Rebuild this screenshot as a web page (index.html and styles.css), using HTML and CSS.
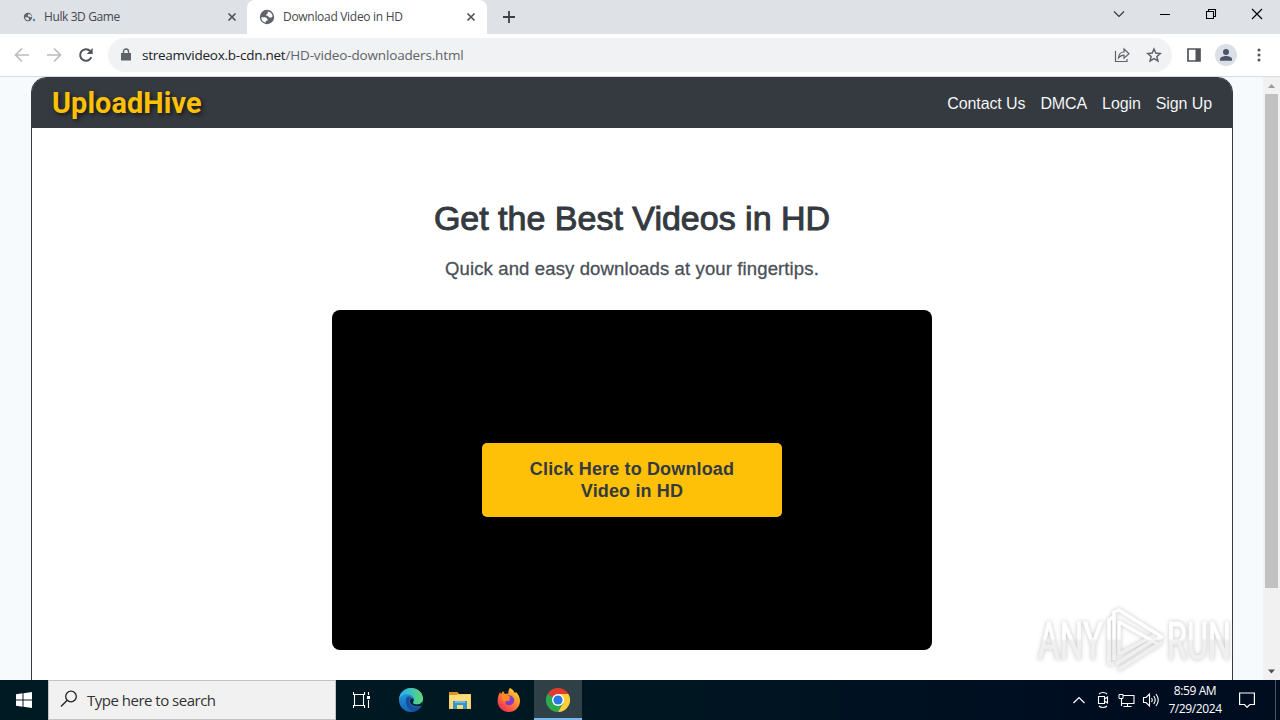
FILE: index.html
```html
<!DOCTYPE html>
<html lang="en">
<head>
    <meta charset="UTF-8">
    <meta name="viewport" content="width=device-width, initial-scale=1.0">
    <title>Download Video in HD</title>
    <link rel="stylesheet" href="styles.css">
</head>
<body>
    <!-- Tab strip -->
    <div class="tab-strip">
        <div class="tab">
            <svg class="favicon" width="16" height="16" viewBox="0 0 16 16">
                <circle cx="7" cy="8" r="4.200" fill="#5f6368"/>
                <path d="M4 8.300h2.400c1 0 1 1 1.600 1.300v1.400C5.600 11.500 4 10.500 4 8.300zM7.500 5c1.700 0 3 1 3.400 2.600l-1.300.8-1.500-.8h-1l-.4-1.200z" fill="#dee1e6"/>
                <circle cx="13" cy="11" r="1.300" fill="#4f8fc9"/>
            </svg>
            <span class="tab-title first-title">Hulk 3D Game</span>
            <svg class="tab-close" width="10" height="10" viewBox="0 0 10 10"><path d="M1.500 1.500l7 7M8.500 1.500l-7 7" stroke="#50545a" stroke-width="1.700"/></svg>
        </div>
        <div class="tab active">
            <svg class="favicon" width="16" height="16" viewBox="0 0 16 16">
                <circle cx="8" cy="8" r="7.200" fill="#5f6368"/>
                <path d="M2.300 8.200h3.600c1.800 0 1.600 1.400 2.700 1.800v1.500l-1.800.4v1.700C4 13.300 2.300 11 2.300 8.200zM8.600 2.400c2.700.2 4.800 2.200 5.100 4.800l-1.600 1.500-2.300-.5-.8-1.400H7.300V5.300l1.600-.9z" fill="#fff"/>
            </svg>
            <span class="tab-title second-title">Download Video in HD</span>
            <svg class="tab-close" width="10" height="10" viewBox="0 0 10 10"><path d="M1.500 1.500l7 7M8.500 1.500l-7 7" stroke="#50545a" stroke-width="1.700"/></svg>
        </div>
        <svg class="new-tab" width="12" height="12" viewBox="0 0 12 12"><path d="M6 0v12M0 6h12" stroke="#3c4043" stroke-width="1.800"/></svg>
        <div class="window-buttons">
            <svg width="12" height="12" viewBox="0 0 12 12"><path d="M1 3.500l5 5 5-5" fill="none" stroke="#333" stroke-width="1.100"/></svg>
            <svg width="12" height="12" viewBox="0 0 12 12"><path d="M1 6.500h10" stroke="#000"/></svg>
            <svg width="12" height="12" viewBox="0 0 12 12"><path d="M1.500 3.500h7v7h-7zM3.500 3.500v-2h7v7h-2" fill="none" stroke="#000" stroke-width="1.100"/></svg>
            <svg width="12" height="12" viewBox="0 0 12 12"><path d="M1 1l10 10M11 1L1 11" stroke="#000" stroke-width="1.200"/></svg>
        </div>
    </div>

    <!-- Toolbar -->
    <div class="toolbar">
        <svg class="tool" width="16" height="16" viewBox="0 0 16 16"><path d="M15 8H2M8 1.500L1.500 8 8 14.500" fill="none" stroke="#babcbe" stroke-width="1.700"/></svg>
        <svg class="tool" width="16" height="16" viewBox="0 0 16 16"><path d="M1 8h13M8 1.500L14.500 8 8 14.500" fill="none" stroke="#babcbe" stroke-width="1.700"/></svg>
        <svg class="tool" width="16" height="16" viewBox="0 0 16 16"><path d="M13.300 10.200A5.800 5.800 0 1 1 12.200 4" fill="none" stroke="#50545a" stroke-width="2"/><path d="M14.700 1v6H8.700z" fill="#50545a"/></svg>
        <div class="address-bar">
            <svg width="10" height="14" viewBox="0 0 10 14"><path d="M0 5h10v7.500H0z" fill="#5f6368"/><path d="M2.500 6V3.500a2.500 2.500 0 0 1 5 0V6" fill="none" stroke="#5f6368" stroke-width="1.400"/></svg>
            <div class="url"><span class="host">streamvideox.b-cdn.net</span><span class="path">/HD-video-downloaders.html</span></div>
            <svg class="share" width="16" height="16" viewBox="0 0 16 16"><path d="M1.500 4v10.500h11.500V12M4.500 11c.3-4 2.500-6 5.500-6V2l5 4.700-5 4.500v-3c-2.500 0-4 .8-5.500 2.800z" fill="none" stroke="#5f6368" stroke-width="1.200"/></svg>
            <svg width="16" height="16" viewBox="0 0 16 16"><path d="M8 2l1.800 4.100 4.500.4-3.400 3 1 4.400L8 11.600l-3.900 2.300 1-4.400-3.400-3 4.500-.4z" fill="none" stroke="#5f6368" stroke-width="1.500"/></svg>
        </div>
        <svg class="panel" width="14" height="14" viewBox="0 0 14 14"><path d="M1 1h12v12H1z" fill="none" stroke="#50545a" stroke-width="1.700"/><path d="M8.500 1H13v12H8.500z" fill="#50545a"/></svg>
        <svg class="profile" width="22" height="22" viewBox="0 0 22 22"><circle cx="11" cy="11" r="11" fill="#dcdfe6"/><circle cx="11" cy="8" r="3" fill="#4c5469"/><path d="M5 16.800V15c0-2.200 3.800-3.100 6-3.100s6 .9 6 3.100v1.800z" fill="#4c5469"/></svg>
        <svg class="kebab" width="4" height="14" viewBox="0 0 4 14"><circle cx="2" cy="2" r="1.500" fill="#50545a"/><circle cx="2" cy="7" r="1.500" fill="#50545a"/><circle cx="2" cy="12" r="1.500" fill="#50545a"/></svg>
    </div>

    <!-- Web page -->
    <div class="viewport">
        <div class="page">
            <div class="container">
                <header class="header">
                    <div class="logo">UploadHive</div>
                    <nav>
                        <a>Contact Us</a>
                        <a>DMCA</a>
                        <a>Login</a>
                        <a>Sign Up</a>
                    </nav>
                </header>
                <main>
                    <h1>Get the Best Videos in HD</h1>
                    <p>Quick and easy downloads at your fingertips.</p>
                    <div class="video">
                        <a class="download">Click Here to Download<br>Video in HD</a>
                    </div>
                </main>
            </div>
        </div>
        <div class="scrollbar">
            <svg width="17" height="17" viewBox="0 0 17 17"><path d="M5 11l3.500-4 3.500 4z" fill="#9c9c9c"/></svg>
            <div class="thumb"></div>
            <svg class="down" width="17" height="17" viewBox="0 0 17 17"><path d="M5 6.500h7L8.500 10.500z" fill="#505050"/></svg>
        </div>
        <svg class="watermark" width="224" height="72" viewBox="0 0 224 72">
            <defs>
                <linearGradient id="fade" gradientUnits="userSpaceOnUse" x1="0" y1="34" x2="0" y2="37">
                    <stop offset="0" stop-color="#fff"/><stop offset="1" stop-color="#f0f0f0"/>
                </linearGradient>
            </defs>
            <g fill="url(#fade)" stroke="url(#fade)" stroke-width="1">
                <text x="6" y="55" textLength="65" lengthAdjust="spacingAndGlyphs">ANY</text>
                <text x="135" y="55" textLength="64" lengthAdjust="spacingAndGlyphs">RUN</text>
            </g>
            <g fill="none" stroke-linejoin="round" stroke-width="3.500">
                <path d="M87 50l36-19M86 66l44-28M84 60l42-27M77 16v44h5" stroke="#f0f0f0"/>
                <path d="M83 12l-6 4v42M82 56V8l5-2 43 27-5 3M87 51V18l39 22" stroke="url(#fade)"/>
            </g>
        </svg>
    </div>

    <!-- Taskbar -->
    <div class="taskbar">
        <div class="start">
            <svg width="16" height="16" viewBox="0 0 16 16"><path d="M0 2.300l6.500-1v6.200H0zM7.500 1.200L16 0v7.500H7.500zM0 8.500h6.500v6.200L0 13.700zM7.500 8.500H16V16l-8.500-1.200z" fill="#fff"/></svg>
        </div>
        <div class="search">
            <svg width="18" height="18" viewBox="0 0 18 18"><circle cx="11" cy="6.500" r="5.300" fill="none" stroke="#222" stroke-width="1.300"/><path d="M7.200 10.300L1 16.500" stroke="#222" stroke-width="1.300"/></svg>
            <span>Type here to search</span>
        </div>
        <div class="task">
            <svg width="18" height="18" viewBox="0 0 18 18"><path d="M.5 1v2.500h11V1M.5 17v-2.500h11V17M1.500 3.500v11M10.500 3.500v11M15.500 1v3M15.500 9v8" fill="none" stroke="#fff" stroke-width="1.100"/><path d="M14 5h3v3h-3z" fill="#fff"/></svg>
        </div>
        <div class="task">
            <svg width="24" height="24" viewBox="0 0 24 24">
                <defs>
                    <linearGradient id="edgeTop"><stop offset=".2" stop-color="#2bb5e4"/><stop offset="1" stop-color="#61d96b"/></linearGradient>
                    <linearGradient id="edgeBody" x2="0" y2="1"><stop offset="0" stop-color="#2aa5e0"/><stop offset="1" stop-color="#1264b8"/></linearGradient>
                </defs>
                <circle cx="12" cy="12" r="12" fill="url(#edgeBody)"/>
                <path d="M0 11C1 4 6 0 12 0c7 0 12 5 12 10.500 0 4-3 6-6.500 6-3 0-4-1.300-3.500-2.200C17 10.500 13 6 8 6 4.500 6 1.500 8 0 11z" fill="url(#edgeTop)"/>
                <path d="M8 9c-3 4-.5 12 6 14.800A12 12 0 0 0 22.500 18c-6 3.500-12 0-12-4.500 0-2 1-3.500 2-4C11 8.500 9.500 8 8 9z" fill="#174f9c"/>
                <path d="M11 13.500c0-2 1-3.200 2.500-3.200 1.500 1 1.500 2.700.5 4-.6 1.200 1 2.300 3.500 2.300 2.500 0 5-1.300 6.300-3.300-.1 1.700-.5 3.200-1.300 4.400C17 19.500 11 17 11 13.500z" fill="#03212c"/>
            </svg>
        </div>
        <div class="task">
            <svg width="22" height="19" viewBox="0 0 22 19"><path d="M0 1h8l2 2h12v15H0z" fill="#f6cf65"/><path d="M0 1h8l1 2-1 1H0z" fill="#df9420"/><path d="M1 4h20v13H1z" fill="#fbdc7d"/><path d="M4 18v-8h14v8h-4v-4H8v4z" fill="#3c92cc"/><path d="M6 10h10v2H6z" fill="#6fbae5"/></svg>
        </div>
        <div class="task">
            <svg width="24" height="24" viewBox="0 0 24 24">
                <defs><linearGradient id="foxFire" x1="1" y1="0" x2=".2" y2="1"><stop offset="0" stop-color="#fff04a"/><stop offset=".4" stop-color="#ff9b26"/><stop offset="1" stop-color="#f3265c"/></linearGradient></defs>
                <path d="M13 0c4 2 4 4 5 5l1-1c2 2 4 5 4 9a11.200 11 0 0 1-22.400 0C.6 9 2 6 3 4l1 2 2-3 2 3c2-.5 3-.3 3.500-.5C11 3 12 1 13 0z" fill="url(#foxFire)"/>
                <path d="M7 9c3-3 9-2 10 2 1 5-4 8-8 5-1-1-1.500-2-1.500-3l4 .2 2-1.700-3-1.200z" fill="#7f39d5"/>
                <path d="M5 7c2-1 4-1 6 .5l3 2-2 1-1 1.500-3 .5L9 15c-3-1-5-4-4-8z" fill="#ff8a22"/>
            </svg>
        </div>
        <div class="task current">
            <svg width="24" height="24" viewBox="0 0 24 24">
                <path d="M12 12L1.600 6A12 12 0 0 1 22.400 6z" fill="#e33b2e"/>
                <path d="M12 12L1.600 6A12 12 0 0 0 12 24l5.200-9z" fill="#2da94f"/>
                <path d="M12 6h10.400A12 12 0 0 1 12 24l5.200-9z" fill="#fdd03b"/>
                <circle cx="12" cy="12" r="6" fill="#fff"/><circle cx="12" cy="12" r="4.600" fill="#2878e5"/>
            </svg>
        </div>
        <div class="tray">
            <svg width="14" height="8" viewBox="0 0 14 8"><path d="M1.500 7L7 1.500 12.500 7" fill="none" stroke="#fff" stroke-width="1.200"/></svg>
            <svg class="meet" width="12" height="18" viewBox="0 0 12 18"><path d="M1.500 5.500h6v7h-6zM7.500 8l3-2v6l-3-2M2 3c2-2 6-2 8 0M2 15c2 2 6 2 8 0" fill="none" stroke="#fff" stroke-width="1.100"/></svg>
            <svg class="network" width="17" height="15" viewBox="0 0 17 15"><path d="M5 2.500h11v8H3.500M9.500 10.500v3M5.500 13.500h8M3.500 6v7" fill="none" stroke="#fff" stroke-width="1.100"/><path d="M1 1.500h4v4H1z" fill="#000d21" stroke="#fff"/></svg>
            <svg class="sound" width="18" height="16" viewBox="0 0 18 16"><path d="M1.500 5.500h2.500l3.500-3.500v12L4 10.500H1.500zM9.500 6q1.500 2 0 4M11.700 4q3 4 0 8M14 2q4.500 6 0 12" fill="none" stroke="#fff" stroke-width="1.100"/></svg>
            <div class="clock"><div class="time">8:59 AM</div><div>7/29/2024</div></div>
            <svg class="notice" width="16" height="16" viewBox="0 0 16 16"><path d="M.6 1h14.800v11.500h-4.500L8 15.300l-2.500-2.800H.6z" fill="none" stroke="#fff" stroke-width="1.200"/></svg>
            <div class="show-desktop"></div>
        </div>
    </div>
</body>
</html>
```
FILE: styles.css
```css
* {
    box-sizing: border-box;
}

body {
    margin: 0;
    width: 1280px;
    height: 720px;
    display: flex;
    flex-direction: column;
    overflow: hidden;
    font-family: "Open Sans", "Noto Sans", sans-serif;
    white-space: nowrap;
}

svg {
    display: block;
    flex: none;
}

/* Browser */
.tab-strip {
    height: 34px;
    flex: none;
    display: flex;
    align-items: center;
    background: #dee1e6;
}

.tab {
    width: 247px;
    height: 34px;
    display: flex;
    align-items: center;
    padding: 0 10px 0 21px;
    font-size: 12px;
    color: #44474b;
}

.tab.active {
    width: 240px;
    padding: 0 11px 0 12px;
    background: #fff;
    border-radius: 8px 8px 0 0;
}

.tab-title {
    margin-left: 7px;
    margin-bottom: 1px;
    flex: 1;
}

.first-title {
    letter-spacing: -0.4px;
}

.second-title {
    margin-left: 8px;
    letter-spacing: -0.3px;
}

.new-tab {
    margin-left: 16px;
}

.window-buttons {
    display: flex;
    gap: 34px;
    margin-left: auto;
    margin-right: 17px;
    margin-bottom: 6px;
}

.toolbar {
    height: 43px;
    flex: none;
    display: flex;
    align-items: center;
    padding-left: 14px;
    background: #fff;
    border-bottom: 1px solid #d9dbde;
}

.tool {
    margin-right: 16px;
}

.address-bar {
    width: 1064px;
    height: 34px;
    margin-left: -2px;
    padding: 0 10px 0 13px;
    display: flex;
    align-items: center;
    background: #f0f2f4;
    border-radius: 17px;
}

.url {
    margin-left: 11px;
    margin-bottom: 1px;
    font-size: 13.5px;
    letter-spacing: -0.15px;
    color: #5f6368;
}

.host {
    letter-spacing: -0.25px;
    color: #202124;
}

.share {
    margin-left: auto;
    margin-right: 16px;
}

.panel {
    margin-left: 15px;
}

.profile {
    margin-left: 14px;
}

.kebab {
    margin-left: 20px;
}

/* Web page */
.viewport {
    height: 603px;
    flex: none;
    display: flex;
    position: relative;
    overflow: hidden;
    font-family: Arial, "Liberation Sans", sans-serif;
}

.page {
    width: 1263px;
    background: #f6fafd;
}

.container {
    width: 1202px;
    height: 650px;
    margin-left: 31px;
    background: #fff;
    border: 1px solid #343a40;
    border-radius: 15px;
    overflow: hidden;
}

.header {
    height: 50px;
    padding: 0 20px;
    display: flex;
    align-items: center;
    justify-content: space-between;
    background: #343a40;
}

.logo {
    font-family: Roboto, sans-serif;
    font-size: 28.8px;
    font-weight: bold;
    letter-spacing: 0.1px;
    color: #ffc107;
    text-shadow: 2px 2px 4px rgba(0, 0, 0, 0.6);
}

nav {
    display: flex;
    gap: 15px;
    padding-top: 2px;
    font-size: 16px;
    letter-spacing: -0.1px;
    color: #fff;
    -webkit-text-stroke: 0.1px #343a40;
}

main {
    display: flex;
    flex-direction: column;
    align-items: center;
    padding-top: 70px;
}

h1 {
    margin: 0;
    font-size: 34px;
    line-height: 40px;
    font-weight: normal;
    color: #343a40;
    -webkit-text-stroke: 1px #343a40;
}

p {
    margin: 19px 0 0;
    height: 53px;
    font-size: 18.5px;
    line-height: 24px;
    letter-spacing: 0.13px;
    color: #495057;
    -webkit-text-stroke: 0.3px #495057;
}

.video {
    width: 600px;
    height: 340px;
    display: flex;
    align-items: center;
    justify-content: center;
    background: #000;
    border-radius: 8px;
}

.download {
    width: 300px;
    height: 74px;
    padding-top: 15px;
    background: #ffc107;
    border-radius: 5px;
    font-size: 18px;
    line-height: 22px;
    font-weight: bold;
    letter-spacing: 0.15px;
    text-align: center;
    color: #343a40;
}

.scrollbar {
    width: 17px;
    display: flex;
    flex-direction: column;
    align-items: center;
    background: #f1f1f1;
}

.thumb {
    width: 13px;
    height: 494px;
    background: #c1c1c1;
}

.down {
    margin-top: auto;
}

/* Sits over the page corner */
.watermark {
    position: absolute;
    right: 24px;
    bottom: 4px;
    font-family: Roboto, sans-serif;
    font-size: 51px;
    filter: drop-shadow(0 0 2px #c4c4c4);
}

/* Taskbar */
.taskbar {
    height: 40px;
    flex: none;
    display: flex;
    background: linear-gradient(90deg, #001a23, #001721 50%, #000d21 85%);
}

.start,
.task {
    width: 48px;
    display: flex;
    align-items: center;
    justify-content: center;
}

.search {
    width: 288px;
    padding-left: 11px;
    display: flex;
    align-items: center;
    gap: 9px;
    background: #f1f1f1;
    border: 1px solid #c3c3c3;
    font-size: 15px;
    letter-spacing: -0.5px;
    color: #333;
}

.search svg {
    margin-bottom: 2px;
}

.task {
    width: 49px;
    padding-left: 2px;
}

.task.current {
    width: 48px;
    margin-left: 2px;
    background: #304047;
    border-bottom: 2px solid #76b9ed;
    padding: 2px 0 0;
}

.tray {
    margin-left: auto;
    width: 208px;
    display: flex;
    align-items: center;
    color: #fff;
}

.meet {
    margin-left: 11px;
}

.network {
    margin-left: 9px;
}

.sound {
    margin-left: 7px;
}

.clock {
    width: 62px;
    margin-left: 4px;
    font-size: 12px;
    line-height: 18px;
    letter-spacing: -0.4px;
    text-align: center;
}

.notice {
    margin-left: 13px;
}

.show-desktop {
    width: 5px;
    height: 40px;
    margin-left: auto;
    border-left: 1px solid #4d5563;
}
```
